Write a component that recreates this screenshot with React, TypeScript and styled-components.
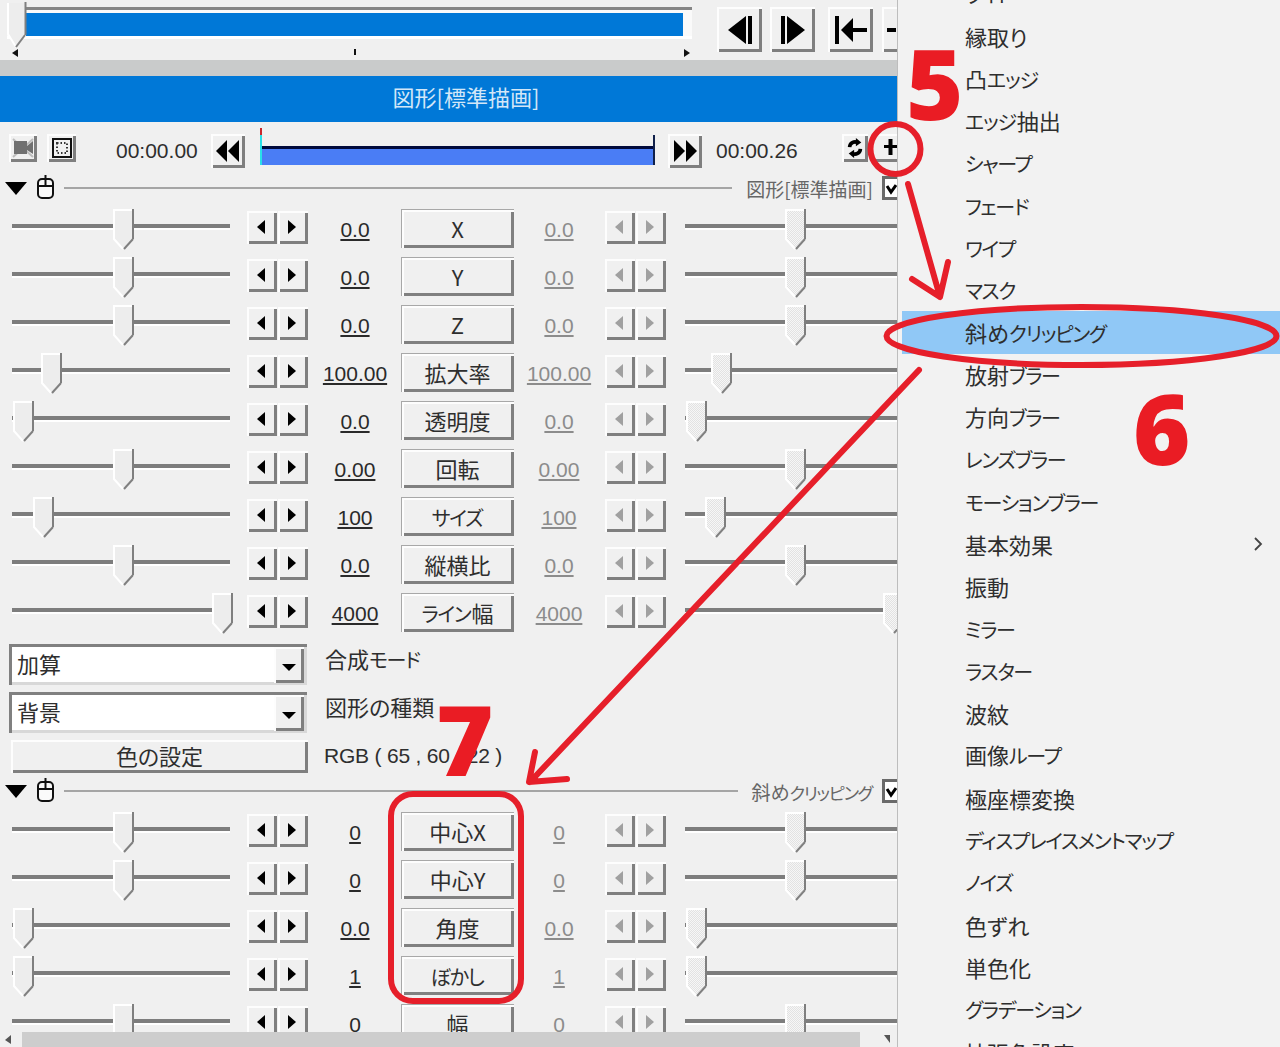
import React from "react";
import styled, { createGlobalStyle, css } from "styled-components";

const Global = createGlobalStyle`
  html, body { margin: 0; padding: 0; background: #f0f0f0; }
  #root { width: 1280px; height: 1047px; overflow: hidden; }
`;

const jp = `"Noto Sans CJK JP", "Liberation Sans", sans-serif`;
const latin = `"Liberation Sans", "Noto Sans CJK JP", sans-serif`;

const bevel = css`
  background: #f0f0f0;
  box-shadow: inset 2px 2px 0 #fdfdfd, inset -3px -3px 0 #7f7f7f;
`;

const Page = styled.div`
  position: relative;
  display: flex;
  width: 1280px;
  height: 1047px;
  overflow: hidden;
  font-family: ${jp};
  font-feature-settings: "palt";
  color: #2e2e2e;
`;

const Kana = styled.span`
  font-size: 0.91em;
  letter-spacing: -1.3px;
  margin-right: 1px;
`;

const Panel = styled.div`
  width: 897px;
  height: 1047px;
  flex-shrink: 0;
  display: flex;
  flex-direction: column;
  overflow: hidden;
  background: #f0f0f0;
`;

const Divider = styled.div`
  width: 1px;
  flex-shrink: 0;
  background: #bdbdbd;
`;

/* ---------- top timeline ---------- */
const TopBar = styled.div`
  height: 60px;
  flex-shrink: 0;
  display: flex;
  align-items: flex-start;
`;

const TopTrack = styled.div`
  position: relative;
  width: 685px;
  height: 32px;
  margin: 7px 0 0 7px;
  flex-shrink: 0;
  border-top: 3px solid #858585;
  border-bottom: 3px solid #fff;
  padding: 3px 9px 0 19px;
  box-sizing: border-box;
  background: #fafafa;
`;

const TopFill = styled.div`
  height: 23px;
  background: #0078d7;
`;

const TopThumb = styled.svg`
  position: absolute;
  left: 0;
  top: -8px;
`;

const Tick = styled.svg<{ $x: number }>`
  position: absolute;
  top: 39px;
  left: ${(p) => p.$x}px;
`;

const TopButtons = styled.div`
  display: flex;
  gap: 8px;
  margin: 7px 0 0 25px;
`;

const TopButton = styled.button<{ $gap?: number; $w?: number }>`
  ${bevel};
  width: ${(p) => p.$w ?? 45}px;
  height: 45px;
  flex-shrink: 0;
  border: 0;
  padding: 0;
  margin-left: ${(p) => p.$gap ?? 0}px;
  display: flex;
  align-items: center;
  justify-content: center;
`;

const Band = styled.div`
  height: 16px;
  flex-shrink: 0;
  background: #c9cbcb;
`;

const Title = styled.div`
  height: 46px;
  flex-shrink: 0;
  padding-left: 35px;
  background: #0078d7;
  color: #d3e7f8;
  font-size: 22px;
  line-height: 41px;
  text-align: center;
`;

/* ---------- toolbar ---------- */
const Toolbar = styled.div`
  height: 50px;
  flex-shrink: 0;
  display: flex;
  align-items: flex-start;
  padding-top: 12px;
  box-sizing: border-box;
`;

const ToolButton = styled.button<{ $w: number; $h?: number; $ml: number; $open?: boolean }>`
  ${bevel};
  ${(p) =>
    p.$open &&
    css`
      box-shadow: inset 2px 2px 0 #fdfdfd, inset 0 -3px 0 #7f7f7f;
      justify-content: flex-end;
      padding-bottom: 4px;
    `}
  width: ${(p) => p.$w}px;
  height: ${(p) => p.$h ?? 28}px;
  margin-left: ${(p) => p.$ml}px;
  flex-shrink: 0;
  border: 0;
  padding-left: 0;
  padding-right: 0;
  display: flex;
  align-items: center;
  ${(p) => !p.$open && "justify-content: center; padding-top: 0; padding-bottom: 0;"}
`;

const TimeText = styled.div<{ $ml: number; $w: number }>`
  margin-left: ${(p) => p.$ml}px;
  width: ${(p) => p.$w}px;
  flex-shrink: 0;
  font-family: ${latin};
  font-size: 21px;
  line-height: 33px;
  white-space: nowrap;
`;

const Scrub = styled.div`
  width: 395px;
  margin: -6px 0 0 15px;
  flex-shrink: 0;
`;

const ScrubMark = styled.div`
  width: 2px;
  height: 7px;
  background: #c8282c;
`;

const ScrubBody = styled.div`
  height: 30px;
  box-sizing: border-box;
  border-left: 2px solid #28e0e8;
  border-right: 2px solid #10204a;
  padding-top: 11px;
`;

const ScrubFill = styled.div`
  height: 19px;
  box-sizing: border-box;
  border-top: 3px solid #000a3c;
  background: #4a7df5;
`;

/* ---------- section header ---------- */
const SectionHeader = styled.div`
  height: 32px;
  flex-shrink: 0;
  display: flex;
  align-items: center;
`;

const Caret = styled.div`
  width: 0;
  height: 0;
  margin-left: 5px;
  border-left: 11px solid transparent;
  border-right: 11px solid transparent;
  border-top: 13px solid #000;
`;

const MouseIcon = styled.svg`
  margin: -4px 0 0 9px;
  flex-shrink: 0;
`;

const HeaderLine = styled.div`
  flex: 1;
  height: 2px;
  margin: 0 14px 0 8px;
  background: #a5a5a5;
`;

const HeaderLabel = styled.div`
  font-size: 19px;
  color: #666;
  white-space: nowrap;
  line-height: 32px;
  padding-top: 2px;
`;

const HeaderCheck = styled.svg`
  margin-left: 9px;
  flex-shrink: 0;
`;

/* ---------- param rows ---------- */
const Body = styled.div`
  flex: 1;
  min-height: 0;
  overflow: hidden;
`;

const Row = styled.div`
  height: 48px;
  display: flex;
  align-items: flex-start;
  padding-left: 12px;
`;

const SliderBox = styled.div<{ $grow?: boolean; $ml?: number }>`
  position: relative;
  height: 48px;
  margin-left: ${(p) => p.$ml ?? 0}px;
  ${(p) => (p.$grow ? "flex: 1;" : "width: 218px; flex-shrink: 0;")}
`;

const SliderTrack = styled.div`
  position: absolute;
  left: 0;
  right: 0;
  top: 20px;
  height: 4px;
  background: #7d7d7d;
  border-bottom: 2px solid #fff;
`;

const SliderThumb = styled.svg`
  position: absolute;
  top: 4px;
`;

const Spin = styled.div<{ $ml: number }>`
  display: flex;
  gap: 1px;
  margin: 7px 0 0 ${(p) => p.$ml}px;
  flex-shrink: 0;
`;

const SpinButton = styled.div`
  ${bevel};
  width: 30px;
  height: 33px;
  display: flex;
  align-items: center;
  justify-content: center;
  padding-right: 2px;
  box-sizing: border-box;
`;

const SpinArrow = styled.i<{ $right?: boolean; $off?: boolean }>`
  width: 0;
  height: 0;
  margin-top: -2px;
  border-top: 7px solid transparent;
  border-bottom: 7px solid transparent;
  ${(p) =>
    p.$right
      ? `border-left: 8px solid ${p.$off ? "#a0a0a0" : "#000"};`
      : `border-right: 8px solid ${p.$off ? "#a0a0a0" : "#000"};`}
`;

const Value = styled.div<{ $off?: boolean; $ml: number }>`
  width: 70px;
  margin-left: ${(p) => p.$ml}px;
  flex-shrink: 0;
  text-align: center;
  font-family: ${latin};
  font-size: 21px;
  line-height: 52px;
  text-decoration: underline;
  text-underline-offset: 2px;
  color: ${(p) => (p.$off ? "#8c8c8c" : "#2a2a2a")};
`;

const ParamButton = styled.div`
  background: #f0f0f0;
  box-shadow: inset 1px 1px 0 #a8a8a8, inset 3px 3px 0 #fdfdfd, inset -3px -3px 0 #808080;
  width: 113px;
  height: 39px;
  margin: 5px 0 0 11px;
  flex-shrink: 0;
  text-align: center;
  font-size: 22px;
  line-height: 38px;
`;

/* ---------- combos ---------- */
const ComboRow = styled.div`
  height: 48px;
  display: flex;
  align-items: flex-start;
  padding-left: 9px;
`;

const Combo = styled.div`
  width: 298px;
  height: 41px;
  flex-shrink: 0;
  box-sizing: border-box;
  display: flex;
  background: #fff;
  box-shadow: inset 3px 3px 0 #808080, inset -3px -3px 0 #d8d8d8;
  padding: 3px 3px 3px 8px;
  margin-top: 8px;
  font-size: 22px;
  line-height: 33px;
`;

const ComboText = styled.div`
  flex: 1;
`;

const ComboDrop = styled.div`
  ${bevel};
  width: 30px;
  margin-bottom: -1px;
  display: flex;
  align-items: center;
  justify-content: center;
`;

const ComboArrow = styled.i`
  width: 0;
  height: 0;
  border-left: 7px solid transparent;
  border-right: 7px solid transparent;
  border-top: 7px solid #000;
  margin-top: 4px;
`;

const FieldLabel = styled.div`
  margin: 0 0 0 18px;
  font-size: 22px;
  line-height: 44px;
  white-space: nowrap;
`;

const ColorRow = styled.div`
  height: 43px;
  flex-shrink: 0;
  display: flex;
  align-items: flex-start;
  padding-left: 11px;
`;

const ColorButton = styled.div`
  ${bevel};
  width: 297px;
  height: 33px;
  flex-shrink: 0;
  margin-top: 8px;
  text-align: center;
  font-size: 22px;
  line-height: 31px;
`;

const RgbText = styled.div`
  margin-left: 16px;
  font-family: ${latin};
  font-size: 21px;
  letter-spacing: -0.2px;
  line-height: 36px;
  margin-top: 6px;
  white-space: nowrap;
`;

/* ---------- scrollbar ---------- */
const ScrollBar = styled.div`
  height: 15px;
  flex-shrink: 0;
  display: flex;
  align-items: stretch;
  background: #f0f0f0;
`;

const ScrollEnd = styled.div<{ $w: number; $right?: boolean }>`
  width: ${(p) => p.$w}px;
  display: flex;
  align-items: flex-end;
  justify-content: ${(p) => (p.$right ? "flex-end" : "flex-start")};
  padding: 0 ${(p) => (p.$right ? "6px" : "0")} 2px ${(p) => (p.$right ? "0" : "4px")};
  box-sizing: border-box;
`;

const ScrollThumb = styled.div`
  flex: 1;
  background: #cdcdcd;
`;

/* ---------- menu ---------- */
const Menu = styled.div`
  flex: 1;
  min-width: 0;
  height: 1047px;
  overflow: hidden;
  background: #f2f2f2;
  padding-left: 4px;
  box-sizing: border-box;
`;

const MenuList = styled.div`
  margin-top: -27px;
`;

const MenuItem = styled.div<{ $active?: boolean }>`
  height: 42.3px;
  display: flex;
  align-items: center;
  justify-content: space-between;
  padding: 0 17px 0 63px;
  box-sizing: border-box;
  font-size: 22px;
  line-height: 30px;
  white-space: nowrap;
  ${(p) => p.$active && "background: #90c8f6;"}
`;

/* ---------- annotations ---------- */
const Annotations = styled.svg`
  position: absolute;
  left: 0;
  top: 0;
  pointer-events: none;
`;

const BigNumber = styled.div<{ $x: number; $y: number }>`
  position: absolute;
  left: ${(p) => p.$x}px;
  top: ${(p) => p.$y}px;
  font-family: "Open Sans", "Noto Sans", sans-serif;
  font-weight: 800;
  font-size: 98px;
  line-height: 98px;
  color: #ea1c24;
`;

/* ---------- drawings ---------- */
const Jp = ({ t }: { t: string }) => (
  <span>
    {t.split(/([ァ-ヶーぼかし]+)/).map((part, i) =>
      i % 2 ? <Kana key={i}>{part}</Kana> : part
    )}
  </span>
);

const Thumb = ({ x, off }: { x: number; off?: boolean }) => (
  <SliderThumb width="22" height="44" viewBox="0 0 22 44" style={{ left: x }}>
    <defs>
      <pattern id="dith" width="2" height="2" patternUnits="userSpaceOnUse">
        <rect width="2" height="2" fill="#f6f6f6" />
        <rect width="1" height="1" fill="#e2e2e2" />
        <rect x="1" y="1" width="1" height="1" fill="#e2e2e2" />
      </pattern>
    </defs>
    <polygon points="1,2 19,2 19,30 10,41 1,30" fill={off ? "url(#dith)" : "#ededed"} />
    <polyline points="10,41 1,31 1,2 19,2" fill="none" stroke="#fff" strokeWidth="2" />
    <line x1="20" y1="1" x2="20" y2="31" stroke="#7f7f7f" strokeWidth="2" />
    <line x1="20" y1="31" x2="11" y2="41" stroke="#808080" strokeWidth="2" />
  </SliderThumb>
);

const Spinner = ({ off, ml }: { off?: boolean; ml: number }) => (
  <Spin $ml={ml}>
    <SpinButton>
      <SpinArrow $off={off} />
    </SpinButton>
    <SpinButton>
      <SpinArrow $right $off={off} />
    </SpinButton>
  </Spin>
);

const Mouse = () => (
  <MouseIcon width="20" height="25" viewBox="0 0 20 25">
    <rect x="2" y="5" width="15" height="19" rx="4" fill="#fafafa" stroke="#111" strokeWidth="2" />
    <line x1="2" y1="12" x2="17" y2="12" stroke="#111" strokeWidth="2" />
    <line x1="9.5" y1="1" x2="9.5" y2="12" stroke="#111" strokeWidth="2" />
  </MouseIcon>
);

const Header = ({ label }: { label: string }) => (
  <SectionHeader>
    <Caret />
    <Mouse />
    <HeaderLine />
    <HeaderLabel><Jp t={label} /></HeaderLabel>
    <HeaderCheck width="15" height="24" viewBox="0 0 15 24">
      <rect width="15" height="24" fill="#6a6a6a" />
      <rect x="3" y="3" width="12" height="18" fill="#fff" />
      <path d="M5 10 L9 16 L14 9" fill="none" stroke="#000" strokeWidth="3" />
    </HeaderCheck>
  </SectionHeader>
);

type P = { label: string; v: string; a: number; b: number };

const Param = ({ label, v, a, b }: P) => (
  <Row>
    <SliderBox>
      <SliderTrack />
      <Thumb x={a} />
    </SliderBox>
    <Spinner ml={17} />
    <Value $ml={12}>{v}</Value>
    <ParamButton><Jp t={label} /></ParamButton>
    <Value $off $ml={10}>{v}</Value>
    <Spinner off ml={11} />
    <SliderBox $grow $ml={19}>
      <SliderTrack />
      <Thumb x={b} off />
    </SliderBox>
  </Row>
);

const first: P[] = [
  { label: "X", v: "0.0", a: 101, b: 100 },
  { label: "Y", v: "0.0", a: 101, b: 100 },
  { label: "Z", v: "0.0", a: 101, b: 100 },
  { label: "拡大率", v: "100.00", a: 29, b: 26 },
  { label: "透明度", v: "0.0", a: 1, b: 1 },
  { label: "回転", v: "0.00", a: 101, b: 100 },
  { label: "サイズ", v: "100", a: 21, b: 20 },
  { label: "縦横比", v: "0.0", a: 101, b: 100 },
  { label: "ライン幅", v: "4000", a: 200, b: 198 },
];

const second: P[] = [
  { label: "中心X", v: "0", a: 101, b: 100 },
  { label: "中心Y", v: "0", a: 101, b: 100 },
  { label: "角度", v: "0.0", a: 1, b: 1 },
  { label: "ぼかし", v: "1", a: 1, b: 1 },
  { label: "幅", v: "0", a: 101, b: 100 },
];

const menu = [
  "ライト", "縁取り", "凸エッジ", "エッジ抽出", "シャープ", "フェード", "ワイプ", "マスク",
  "斜めクリッピング", "放射ブラー", "方向ブラー", "レンズブラー", "モーションブラー", "基本効果",
  "振動", "ミラー", "ラスター", "波紋", "画像ループ", "極座標変換", "ディスプレイスメントマップ",
  "ノイズ", "色ずれ", "単色化", "グラデーション", "拡張色設定",
];

export default function App() {
  return (
    <Page>
      <Global />
      <Panel>
        <TopBar>
          <TopTrack>
            <TopFill />
            <TopThumb width="20" height="46" viewBox="0 0 20 46">
              <polygon points="1,1 18,1 18,32 9,45 1,32" fill="#ededed" />
              <polyline points="9,45 1,32 1,1" fill="none" stroke="#fff" strokeWidth="2" />
              <line x1="18.5" y1="0" x2="18.5" y2="33" stroke="#7f7f7f" strokeWidth="2" />
              <line x1="18" y1="33" x2="9" y2="45" stroke="#808080" strokeWidth="2" />
            </TopThumb>
            <Tick $x={5} width="7" height="8" viewBox="0 0 7 8"><polygon points="6,0 6,8 0,4" fill="#111" /></Tick>
            <Tick $x={347} width="3" height="8" viewBox="0 0 3 8"><rect width="2" height="6" fill="#111" /></Tick>
            <Tick $x={676} width="7" height="8" viewBox="0 0 7 8"><polygon points="1,0 1,8 7,4" fill="#111" /></Tick>
          </TopTrack>
          <TopButtons>
            <TopButton>
              <svg width="26" height="30" viewBox="0 0 26 30"><polygon points="19,1 19,29 1,15" fill="#000" /><rect x="21" y="1" width="4" height="28" fill="#000" /></svg>
            </TopButton>
            <TopButton>
              <svg width="26" height="30" viewBox="0 0 26 30"><rect x="1" y="1" width="4" height="28" fill="#000" /><polygon points="7,1 7,29 25,15" fill="#000" /></svg>
            </TopButton>
            <TopButton $gap={5}>
              <svg width="32" height="30" viewBox="0 0 32 30"><rect x="0" y="1" width="4" height="28" fill="#000" /><polygon points="6,15 18,3 18,27" fill="#000" /><rect x="16" y="13" width="16" height="4" fill="#000" /></svg>
            </TopButton>
            <TopButton $gap={1} $w={30}>
              <svg width="20" height="30" viewBox="0 0 20 30"><rect x="0" y="13" width="9" height="4" fill="#000" /></svg>
            </TopButton>
          </TopButtons>
        </TopBar>
        <Band />
        <Title><Jp t="図形[標準描画]" /></Title>

        <Toolbar>
          <ToolButton $w={28} $ml={9}>
            <svg width="24" height="22" viewBox="0 0 24 22">
              <path d="M2 2 L22 20 M22 2 L2 20" stroke="#bdbdbd" strokeWidth="2" />
              <rect x="3" y="4" width="13" height="13" fill="#707070" />
              <polygon points="16,9 22,4 22,17 16,13" fill="#707070" />
            </svg>
          </ToolButton>
          <ToolButton $w={29} $ml={10}>
            <svg width="20" height="20" viewBox="0 0 20 20">
              <rect x="1" y="1" width="18" height="18" fill="#f0f0f0" stroke="#111" strokeWidth="2" />
              <rect x="5" y="5" width="10" height="10" fill="none" stroke="#333" strokeWidth="2" strokeDasharray="1.5 2" />
            </svg>
          </ToolButton>
          <TimeText $ml={40} $w={95}>00:00.00</TimeText>
          <ToolButton $w={34} $h={34} $ml={0}>
            <svg width="26" height="24" viewBox="0 0 26 24"><polygon points="12,1 12,23 1,12" fill="#000" /><polygon points="24,1 24,23 13,12" fill="#000" /></svg>
          </ToolButton>
          <Scrub>
            <ScrubMark />
            <ScrubBody>
              <ScrubFill />
            </ScrubBody>
          </Scrub>
          <ToolButton $w={34} $h={34} $ml={13}>
            <svg width="26" height="24" viewBox="0 0 26 24"><polygon points="2,1 2,23 13,12" fill="#000" /><polygon points="14,1 14,23 25,12" fill="#000" /></svg>
          </ToolButton>
          <TimeText $ml={14} $w={126}>00:00.26</TimeText>
          <ToolButton $w={26} $ml={0}>
            <svg width="18" height="22" viewBox="0 0 20 24">
              <path d="M4 11 A6 6 0 0 1 13 6 M16 13 A6 6 0 0 1 7 18" fill="none" stroke="#000" strokeWidth="4" />
              <polygon points="11,1 17,6 11,10" fill="#000" />
              <polygon points="9,14 3,18 9,23" fill="#000" />
            </svg>
          </ToolButton>
          <ToolButton $w={25} $ml={4} $open>
            <svg width="13" height="18" viewBox="0 0 13 18"><rect x="4.5" y="1" width="4" height="16" fill="#000" /><rect x="0" y="7" width="13" height="3" fill="#000" /></svg>
          </ToolButton>
        </Toolbar>

        <Header label="図形[標準描画]" />
        <Body>
          {first.map((p) => (
            <Param key={p.label} {...p} />
          ))}
          <ComboRow>
            <Combo>
              <ComboText>加算</ComboText>
              <ComboDrop><ComboArrow /></ComboDrop>
            </Combo>
            <FieldLabel><Jp t="合成モード" /></FieldLabel>
          </ComboRow>
          <ComboRow>
            <Combo>
              <ComboText>背景</ComboText>
              <ComboDrop><ComboArrow /></ComboDrop>
            </Combo>
            <FieldLabel>図形の種類</FieldLabel>
          </ComboRow>
          <ColorRow>
            <ColorButton>色の設定</ColorButton>
            <RgbText>RGB ( 65 , 60 , 22 )</RgbText>
          </ColorRow>
          <Header label="斜めクリッピング" />
          {second.map((p) => (
            <Param key={p.label} {...p} />
          ))}
        </Body>
        <ScrollBar>
          <ScrollEnd $w={22}>
            <svg width="8" height="10" viewBox="0 0 8 10"><polygon points="7,0 7,9 1,5" fill="#555" /></svg>
          </ScrollEnd>
          <ScrollThumb />
          <ScrollEnd $w={37} $right>
            <svg width="8" height="10" viewBox="0 0 8 10"><polygon points="1,0 7,0 7,8" fill="#555" /></svg>
          </ScrollEnd>
        </ScrollBar>
      </Panel>
      <Divider />
      <Menu>
        <MenuList>
          {menu.map((m) => (
            <MenuItem key={m} $active={m === "斜めクリッピング"}>
              <Jp t={m} />
              {m === "基本効果" && (
                <svg width="10" height="16" viewBox="0 0 10 16"><path d="M2 2 L8 8 L2 14" fill="none" stroke="#444" strokeWidth="1.8" /></svg>
              )}
            </MenuItem>
          ))}
        </MenuList>
      </Menu>

      <BigNumber $x={906} $y={33}>5</BigNumber>
      <BigNumber $x={1133} $y={378}>6</BigNumber>
      <BigNumber $x={436} $y={689}>7</BigNumber>
      <Annotations width="1280" height="1047" viewBox="0 0 1280 1047" fill="none" stroke="#e61f2a" strokeLinecap="round" strokeLinejoin="round">
        <circle cx="895.5" cy="149" r="25" strokeWidth="6" />
        <path d="M908 184 L940 297 M912 279 L940 297 L948 262" strokeWidth="6" />
        <ellipse cx="1081.5" cy="336" rx="195" ry="29" strokeWidth="6" />
        <path d="M919 370 L530 782 M535 752 L529 782 L567 779" strokeWidth="6" />
        <rect x="391" y="794" width="130" height="207" rx="22" strokeWidth="6" />
      </Annotations>
    </Page>
  );
}
